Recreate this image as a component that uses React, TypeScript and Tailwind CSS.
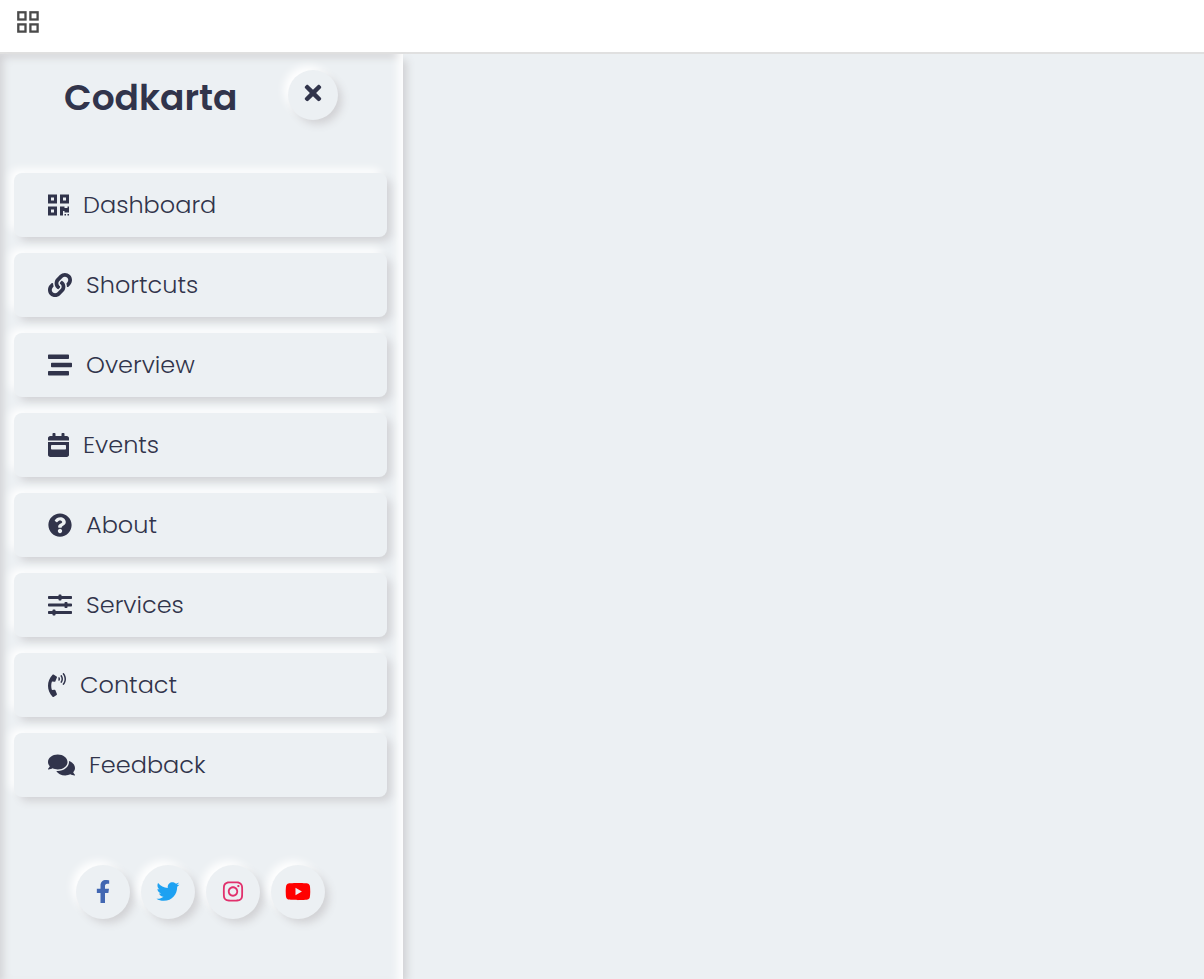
import {
  FaCalendarWeek,
  FaComments,
  FaFacebookF,
  FaInstagram,
  FaLink,
  FaPhoneVolume,
  FaQrcode,
  FaQuestionCircle,
  FaSlidersH,
  FaStream,
  FaTimes,
  FaTwitter,
  FaYoutube,
} from "react-icons/fa";

const menu = [
  { label: "Dashboard", Icon: FaQrcode, width: "w-[21px]" },
  { label: "Shortcuts", Icon: FaLink, width: "w-6" },
  { label: "Overview", Icon: FaStream, width: "w-6" },
  { label: "Events", Icon: FaCalendarWeek, width: "w-[21px]" },
  { label: "About", Icon: FaQuestionCircle, width: "w-6" },
  { label: "Services", Icon: FaSlidersH, width: "w-6" },
  { label: "Contact", Icon: FaPhoneVolume, width: "w-[18px]" },
  { label: "Feedback", Icon: FaComments, width: "w-[27px]" },
];

const socials = [
  { label: "Facebook", Icon: FaFacebookF, color: "text-[#4267b2]" },
  { label: "Twitter", Icon: FaTwitter, color: "text-[#1da1f2]" },
  { label: "Instagram", Icon: FaInstagram, color: "text-[#e1306c]" },
  { label: "YouTube", Icon: FaYoutube, color: "text-[#ff0000]" },
];

const raised = "bg-[#ecf0f3] shadow-[5px_5px_8px_-1px_#d1d1d4,-5px_-5px_9px_-1px_#ffffff]";

function GridIcon() {
  return (
    <svg viewBox="0 0 22 22" className="size-[22px]" fill="none" stroke="#4a4a4a" strokeWidth="2.3" aria-hidden="true">
      <rect x="1.3" y="1.3" width="7.2" height="7.2" />
      <rect x="13.4" y="1.3" width="7.2" height="7.2" />
      <rect x="1.3" y="13.4" width="7.2" height="7.2" />
      <rect x="13.4" y="13.4" width="7.2" height="7.2" />
    </svg>
  );
}

export default function App() {
  return (
    <div className="flex min-h-screen flex-col bg-[#ecf0f3] font-[Poppins,Inter,sans-serif] text-[#31344b]">
      <header className="flex h-[54px] items-start border-b-2 border-[#e0e0e0] bg-white px-[17px] pt-[11px]">
        <button type="button" aria-label="Open menu">
          <GridIcon />
        </button>
      </header>
      <div className="flex flex-1">
        <aside className="w-[403px] max-w-full shrink-0 pb-15 shadow-[inset_-10px_0_10px_-5px_#ffffff,inset_4px_4px_8px_-1px_#d1d1d4,5px_5px_8px_-1px_#d1d1d4]">
          <div className="flex items-start justify-between pt-4 pr-[65px] pl-16">
            <h1 className="pt-[5px] text-4xl leading-[46px] font-semibold">Codkarta</h1>
            <button
              type="button"
              aria-label="Close menu"
              className={`flex size-[50px] items-center justify-center rounded-full pb-1 ${raised}`}
            >
              <FaTimes className="size-6" />
            </button>
          </div>
          <nav aria-label="Main" className="mt-[52px] pr-4 pl-3.5">
            <ul className="flex flex-col gap-4">
              {menu.map(({ label, Icon, width }) => (
                <li key={label}>
                  <a
                    href="#"
                    className={`flex h-16 items-center gap-3.5 rounded-lg pl-[34px] text-2xl font-light ${raised}`}
                  >
                    <Icon className={`h-6 ${width}`} />
                    {label}
                  </a>
                </li>
              ))}
            </ul>
          </nav>
          <div className="mt-[68px] flex justify-center gap-[11px] pr-0.5">
            {socials.map(({ label, Icon, color }) => (
              <a
                key={label}
                href="#"
                aria-label={label}
                className={`flex size-[54px] items-center justify-center rounded-full pb-0.5 ${raised} ${color}`}
              >
                <Icon className="h-[23px] w-[26px]" />
              </a>
            ))}
          </div>
        </aside>
        <main className="flex-1" />
      </div>
    </div>
  );
}
